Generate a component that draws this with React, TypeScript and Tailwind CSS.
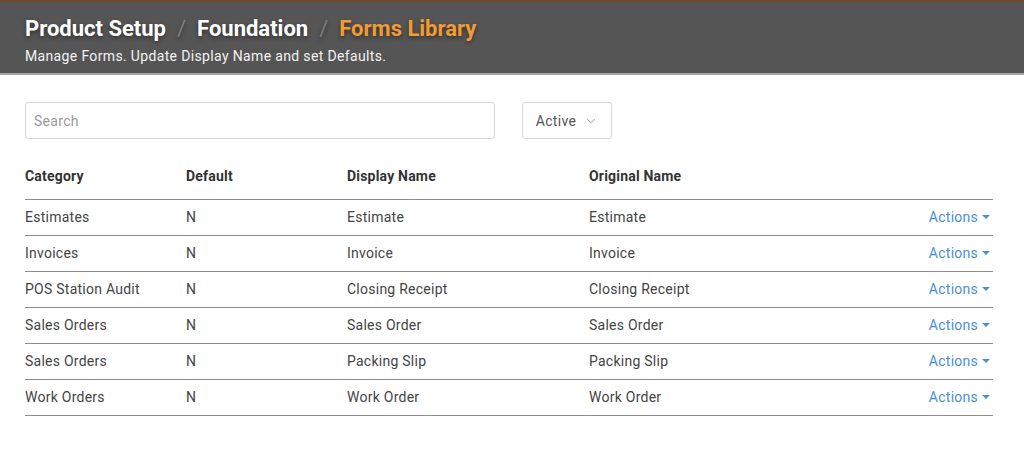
import { ChevronDown } from 'lucide-react'

const rows = [
  { category: 'Estimates', def: 'N', display: 'Estimate', original: 'Estimate' },
  { category: 'Invoices', def: 'N', display: 'Invoice', original: 'Invoice' },
  { category: 'POS Station Audit', def: 'N', display: 'Closing Receipt', original: 'Closing Receipt' },
  { category: 'Sales Orders', def: 'N', display: 'Sales Order', original: 'Sales Order' },
  { category: 'Sales Orders', def: 'N', display: 'Packing Slip', original: 'Packing Slip' },
  { category: 'Work Orders', def: 'N', display: 'Work Order', original: 'Work Order' },
]

export default function App() {
  return (
    <div className="min-h-[466px] w-full bg-white font-['Roboto',sans-serif]">
      <header className="h-[75px] border-t-2 border-b-2 border-t-[#6e4b31] border-b-[#a3a3a3] bg-[#555555] px-[25px] pt-[13px]">
        <h1 className="flex items-center text-[22px] font-bold leading-[28px] [text-shadow:0_2px_4px_rgba(0,0,0,0.45)]">
          <span className="text-white">Product Setup</span>
          <span className="mx-[11px] font-normal text-[#7d7d7d]">/</span>
          <span className="text-white">Foundation</span>
          <span className="mx-[11px] font-normal text-[#7d7d7d]">/</span>
          <span className="text-[#f29b30]">Forms Library</span>
        </h1>
        <p className="mt-[4px] text-[14px] leading-[18px] tracking-[0.35px] text-[#f2f2f2]">
          Manage Forms. Update Display Name and set Defaults.
        </p>
      </header>

      <main className="px-[25px] pr-[31px] pt-[27px]">
        <div className="flex items-center gap-[27px]">
          <input
            placeholder="Search"
            className="h-[37px] w-[470px] rounded-[3px] border border-[#d6d6d6] px-[8px] text-[14px] tracking-[0.3px] text-[#444] placeholder:text-[#9a9a9a] outline-none"
          />
          <button className="flex h-[37px] w-[90px] items-center justify-center gap-[8px] rounded-[3px] border border-[#d6d6d6] pt-[1px] text-[14px] tracking-[0.3px] text-[#555]">
            Active
            <ChevronDown className="h-[14px] w-[14px] text-[#888]" strokeWidth={1.5} />
          </button>
        </div>

        <table className="mt-[23px] w-full table-fixed border-collapse text-[14px] tracking-[0.25px] text-[#444]">
          <colgroup>
            <col className="w-[161px]" />
            <col className="w-[161px]" />
            <col className="w-[242px]" />
            <col className="w-[242px]" />
            <col />
          </colgroup>
          <thead>
            <tr className="h-[37px] border-b border-[#8c8c8c] text-left">
              <th className="pb-[8px] font-bold tracking-[0.2px] text-[#333]">Category</th>
              <th className="pb-[8px] font-bold tracking-[0.2px] text-[#333]">Default</th>
              <th className="pb-[8px] font-bold tracking-[0.2px] text-[#333]">Display Name</th>
              <th className="pb-[8px] font-bold tracking-[0.2px] text-[#333]">Original Name</th>
              <th />
            </tr>
          </thead>
          <tbody>
            {rows.map((r, i) => (
              <tr key={i} className="h-[36px] border-b border-[#8c8c8c]">
                <td>{r.category}</td>
                <td>{r.def}</td>
                <td>{r.display}</td>
                <td>{r.original}</td>
                <td className="text-right">
                  <span className="inline-flex items-center gap-[4px] pr-[3px] text-[#4a8fd6]">
                    Actions
                    <span className="inline-block h-0 w-0 border-x-[4px] border-t-[4px] border-x-transparent border-t-[#4a8fd6]" />
                  </span>
                </td>
              </tr>
            ))}
          </tbody>
        </table>
      </main>
    </div>
  )
}
